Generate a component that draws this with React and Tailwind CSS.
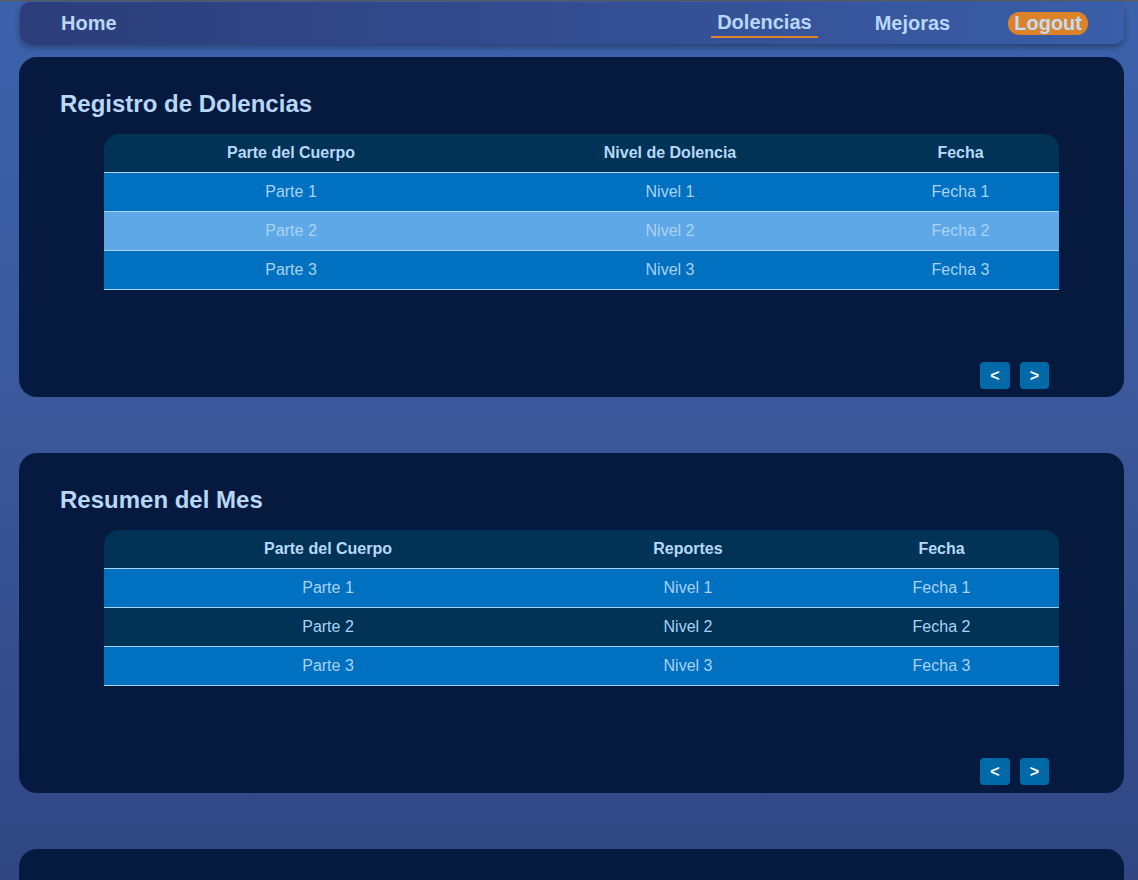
import React from 'react';

const tableOne = {
    cols: 'grid-cols-[374px_384px_197px]',
    headers: ['Parte del Cuerpo', 'Nivel de Dolencia', 'Fecha'],
    rows: [
        ['Parte 1', 'Nivel 1', 'Fecha 1'],
        ['Parte 2', 'Nivel 2', 'Fecha 2'],
        ['Parte 3', 'Nivel 3', 'Fecha 3'],
    ],
    rowColors: ['bg-[#0070c0]', 'bg-[#5fa8e8]', 'bg-[#0070c0]'],
};

const tableTwo = {
    cols: 'grid-cols-[448px_272px_235px]',
    headers: ['Parte del Cuerpo', 'Reportes', 'Fecha'],
    rows: [
        ['Parte 1', 'Nivel 1', 'Fecha 1'],
        ['Parte 2', 'Nivel 2', 'Fecha 2'],
        ['Parte 3', 'Nivel 3', 'Fecha 3'],
    ],
    rowColors: ['bg-[#0070c0]', 'bg-[#003356]', 'bg-[#0070c0]'],
};

function DataTable({ table }) {
    return (
        <div className="ml-[44px] w-[955px]">
            <div className={`grid ${table.cols} h-[39px] pb-[1px] items-center rounded-t-[15px] bg-[#003356] border-b border-[#a9d2f3]`}>
                {table.headers.map((h) => (
                    <div key={h} className="text-center text-[16px] font-bold text-[#b8d8f8]">
                        {h}
                    </div>
                ))}
            </div>
            {table.rows.map((row, i) => (
                <div
                    key={i}
                    className={`grid ${table.cols} h-[39px] items-center border-b border-[#a9d2f3] ${table.rowColors[i]}`}
                >
                    {row.map((cell) => (
                        <div key={cell} className="text-center text-[16px] text-[#a9d2f3]">
                            {cell}
                        </div>
                    ))}
                </div>
            ))}
        </div>
    );
}

function Pager() {
    return (
        <div className="mt-auto mb-[8px] mr-[75px] flex justify-end gap-[10px]">
            <button className="w-[30px] h-[27px] rounded-[4px] bg-[#006aa8] text-white font-bold text-[16px] leading-none">
                &lt;
            </button>
            <button className="w-[29px] h-[27px] rounded-[4px] bg-[#006aa8] text-white font-bold text-[16px] leading-none">
                &gt;
            </button>
        </div>
    );
}

function Card({ title, table }) {
    return (
        <section className="ml-[19px] mr-[14px] h-[340px] rounded-[18px] bg-[#061a40] pl-[41px] pt-[33px] flex flex-col">
            {title && (
                <h2 className="h-[28px] leading-[28px] text-[24px] font-bold text-[#b8d7f7] mb-[16px]">
                    {title}
                </h2>
            )}
            {table && <DataTable table={table} />}
            {table && <Pager />}
        </section>
    );
}

export default function App() {
    return (
        <div className="min-h-screen bg-fixed bg-linear-to-b from-[#3c62ac] via-[#3a5799] to-[#2f4682] font-['Liberation_Sans',Arial,sans-serif] pb-[40px]">
            <div className="h-[1px] bg-[#5e5a54]" />
            <nav className="ml-[20px] mr-[14px] mt-[1px] h-[42px] rounded-[10px] bg-linear-to-r from-[#2c3d7a] to-[#3a5ea8] shadow-[0_3px_6px_rgba(0,0,0,0.35)] flex items-center justify-between pl-[41px] pr-[36px]">
                <a href="#" className="text-[20px] font-bold text-[#b8d7f7]">Home</a>
                <ul className="flex items-center">
                    <li>
                        <a href="#" className="block px-[6px] pb-[2px] border-b-2 border-[#e0842c] text-[20px] font-bold text-[#b8d7f7] leading-[24px] mt-[2px]">
                            Dolencias
                        </a>
                    </li>
                    <li className="ml-[51px]">
                        <a href="#" className="block px-[6px] text-[20px] font-bold text-[#b8d7f7] leading-[24px]">
                            Mejoras
                        </a>
                    </li>
                    <li className="ml-[52px]">
                        <a href="#" className="block px-[6px] h-[23px] rounded-[11px] bg-[#dc8228] text-[20px] font-bold text-[#c4ddf6] leading-[23px]">
                            Logout
                        </a>
                    </li>
                </ul>
            </nav>
            <div className="mt-[13px] flex flex-col gap-[56px]">
                <Card title="Registro de Dolencias" table={tableOne} />
                <Card title="Resumen del Mes" table={tableTwo} />
                <Card />
            </div>
        </div>
    );
}
